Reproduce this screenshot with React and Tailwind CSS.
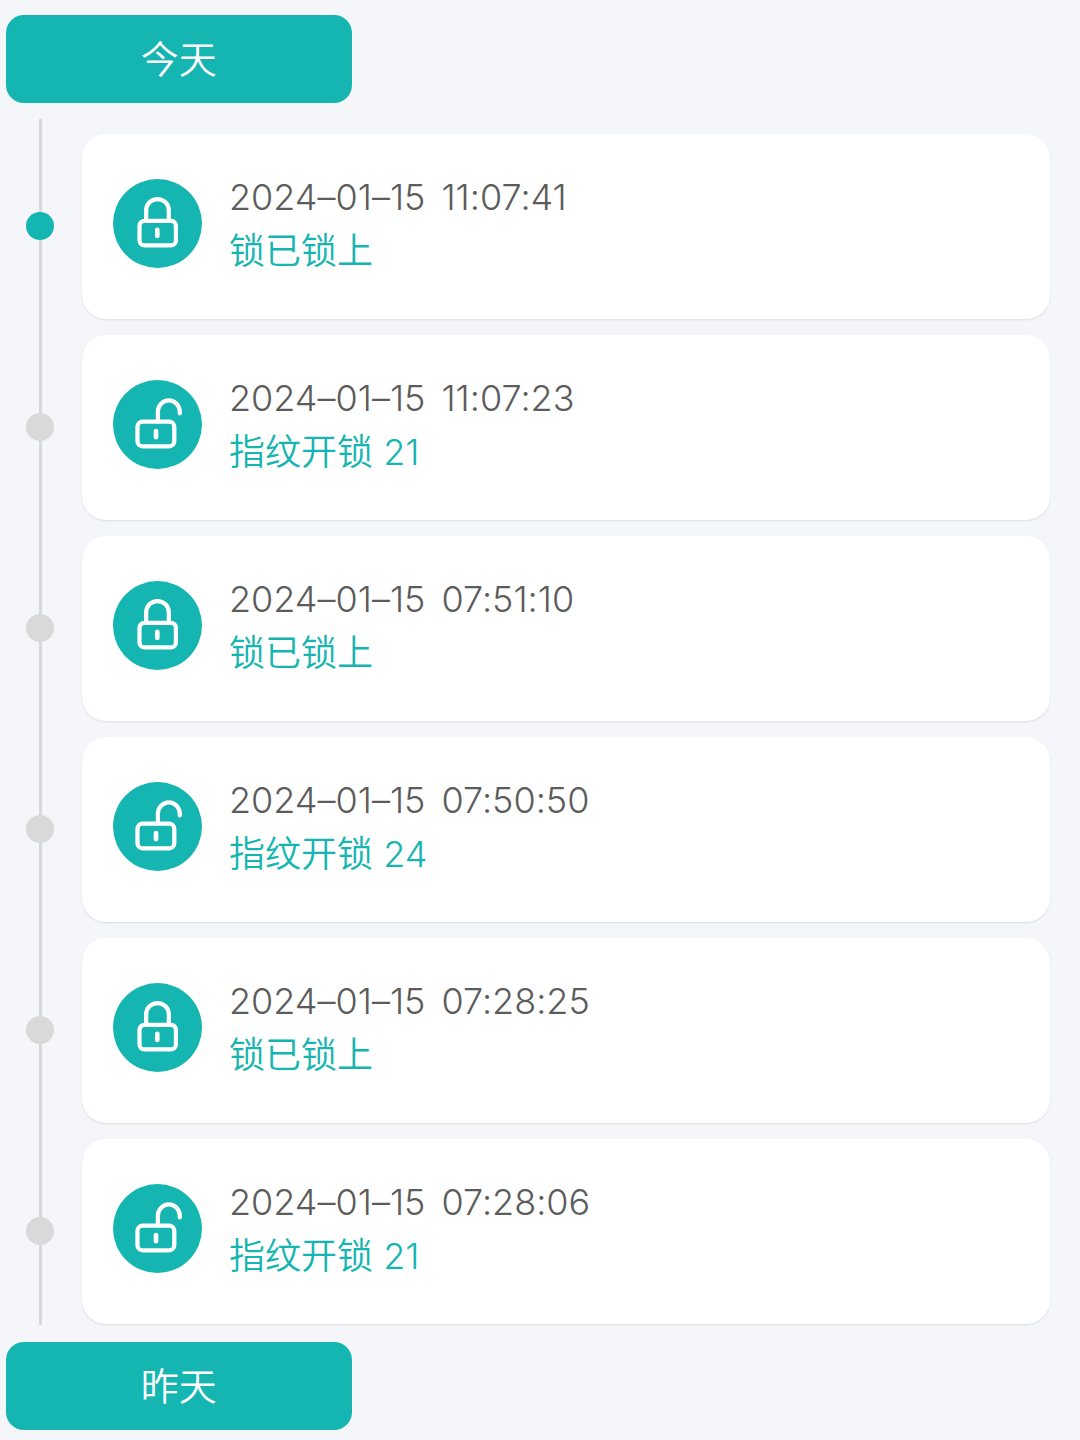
const records = [
  { date: "2024–01–15", time: "11:07:41", text: "锁已锁上", locked: true },
  { date: "2024–01–15", time: "11:07:23", text: "指纹开锁 21", locked: false },
  { date: "2024–01–15", time: "07:51:10", text: "锁已锁上", locked: true },
  { date: "2024–01–15", time: "07:50:50", text: "指纹开锁 24", locked: false },
  { date: "2024–01–15", time: "07:28:25", text: "锁已锁上", locked: true },
  { date: "2024–01–15", time: "07:28:06", text: "指纹开锁 21", locked: false },
];

function LockIcon({ locked }) {
  return (
    <svg
      viewBox="0 0 88 88"
      className="mt-[9px] size-[89px] shrink-0"
      fill="none"
      stroke="white"
      strokeWidth="4.2"
      strokeLinecap="round"
      aria-hidden="true"
    >
      <circle cx="44" cy="44" r="44" fill="#15b5b1" stroke="none" />
      {locked ? (
        <>
          <rect x="26.2" y="41.3" width="36" height="24.4" rx="5" />
          <path d="M32.8 41V31a11.2 11.2 0 0 1 22.4 0V41" />
          <path d="M43.8 50.3V56.3" strokeWidth="4.6" />
        </>
      ) : (
        <>
          <rect x="24.2" y="41.2" width="36.4" height="24.4" rx="5" />
          <path d="M44.4 41V31a10.8 10.8 0 0 1 21.6 0V33" />
          <path d="M42.5 50.5V56.5" strokeWidth="4.6" />
        </>
      )}
    </svg>
  );
}

function DayLabel({ children }) {
  return (
    <h2 className="ml-[6px] flex h-[88px] w-[32%] items-center justify-center rounded-[18px] bg-[#15b5b1] text-[38px] font-[350] text-white">
      {children}
    </h2>
  );
}

function Record({ date, time, text, locked, active }) {
  return (
    <li className="flex items-center">
      <span
        className={
          active
            ? "relative mb-[2px] ml-[26px] size-7 shrink-0 rounded-full bg-[#15b5b1]"
            : "relative mb-[2px] ml-[26px] size-7 shrink-0 rounded-full bg-[#d9d9d9]"
        }
      />
      <div className="mr-[30px] ml-7 flex grow items-start gap-[27px] rounded-3xl bg-white pt-9 pb-[41px] pl-[31px] shadow-[0_1px_2px_rgba(0,0,0,0.1)]">
        <LockIcon locked={locked} />
        <div className="text-[36px] leading-[54px] font-[350]">
          <time className="flex gap-4 text-[#5c5c5c] [font-feature-settings:'calt'_0]">
            <span>{date}</span>
            <span>{time}</span>
          </time>
          <p className="text-[#15b5b1]">{text}</p>
        </div>
      </div>
    </li>
  );
}

export default function App() {
  return (
    <main className="min-h-screen bg-[#f4f6fa] pt-[15px] pb-[10px] font-['Inter','Noto_Sans_CJK_SC',sans-serif]" lang="zh-CN">
      <DayLabel>今天</DayLabel>
      <div className="relative mt-4 mb-[17px] pt-[15px] pb-px">
        <div className="absolute inset-y-0 left-[39px] w-[3px] bg-[#d6d8da]" />
        <ol className="flex flex-col gap-4">
          {records.map((r, i) => (
            <Record key={r.time} {...r} active={i === 0} />
          ))}
        </ol>
      </div>
      <DayLabel>昨天</DayLabel>
    </main>
  );
}
